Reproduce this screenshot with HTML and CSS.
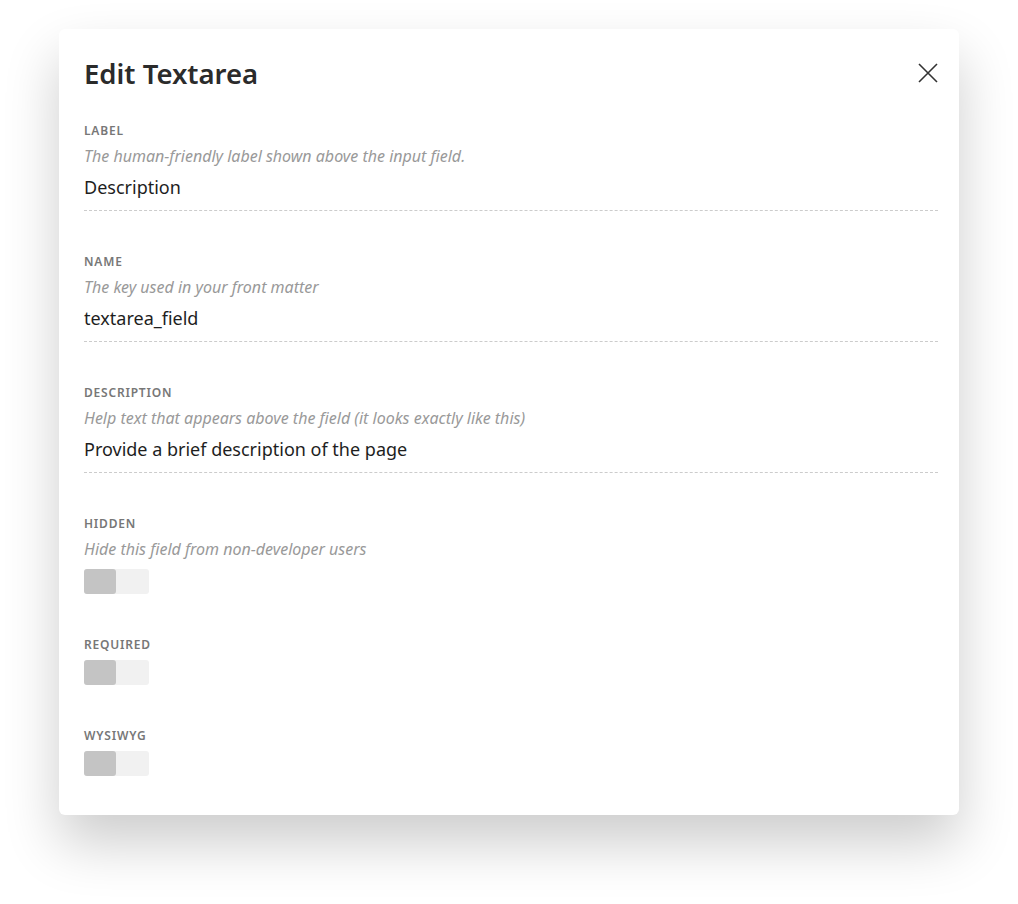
FILE: index.html
```html
<!DOCTYPE html>
<html lang="en">
<head>
    <meta charset="UTF-8">
    <title>Edit Textarea</title>
    <link rel="stylesheet" href="styles.css">
</head>
<body>
    <div class="modal">
        <div class="modal-header">
            <h1 class="modal-title">Edit Textarea</h1>
            <button class="close" aria-label="Close">
                <svg width="20" height="20" viewBox="0 0 20 20">
                    <path d="M1 1L19 19M19 1L1 19" stroke="#333" stroke-width="1.6" fill="none"/>
                </svg>
            </button>
        </div>

        <div class="field">
            <div class="field-label">Label</div>
            <div class="field-help">The human-friendly label shown above the input field.</div>
            <div class="field-value">Description</div>
        </div>

        <div class="field">
            <div class="field-label">Name</div>
            <div class="field-help">The key used in your front matter</div>
            <div class="field-value">textarea_field</div>
        </div>

        <div class="field">
            <div class="field-label">Description</div>
            <div class="field-help">Help text that appears above the field (it looks exactly like this)</div>
            <div class="field-value">Provide a brief description of the page</div>
        </div>

        <div class="field">
            <div class="field-label">Hidden</div>
            <div class="field-help">Hide this field from non-developer users</div>
            <div class="toggle"><span class="knob"></span></div>
        </div>

        <div class="field">
            <div class="field-label">Required</div>
            <div class="toggle"><span class="knob"></span></div>
        </div>

        <div class="field">
            <div class="field-label">WYSIWYG</div>
            <div class="toggle"><span class="knob"></span></div>
        </div>
    </div>
</body>
</html>
```

FILE: styles.css
```css
* {
    margin: 0;
    padding: 0;
    box-sizing: border-box;
}

html,
body {
    background: #fff;
}

body {
    font-family: "Noto Sans", sans-serif;
    color: #222;
    padding: 29px 59px;
    min-height: 904px;
}

.modal {
    width: 900px;
    background: #fff;
    border-radius: 6px;
    box-shadow: 0 28px 55px rgba(0, 0, 0, 0.2);
    padding: 29px 21px 38px 25px;
}

.modal-header {
    display: flex;
    justify-content: space-between;
    align-items: center;
    height: 32px;
}

.modal-title {
    font-size: 27.5px;
    font-weight: 600;
    color: #2b2b2b;
    line-height: 32px;
}

.close {
    border: none;
    background: none;
    width: 20px;
    height: 20px;
    margin-top: -3px;
}

.field {
    margin-top: 33px;
    padding-bottom: 1px;
}

.field + .field {
    margin-top: 42px;
}

.field-label {
    font-size: 12px;
    line-height: 16px;
    font-weight: 600;
    letter-spacing: 0.8px;
    text-transform: uppercase;
    color: #777;
}

.field-help {
    margin-top: 7px;
    font-size: 16px;
    line-height: 20px;
    font-style: italic;
    color: #999;
}

.field-value {
    margin-top: 8px;
    font-size: 18px;
    line-height: 26px;
    color: #1e1e1e;
    padding-bottom: 10px;
    border-bottom: 1px dashed #ccc;
}

.field-help + .toggle {
    margin-top: 10px;
}

.toggle {
    margin-top: 7px;
    width: 65px;
    height: 25px;
    background: #f1f1f1;
    border-radius: 3px;
}

.knob {
    display: block;
    width: 32px;
    height: 25px;
    background: #c4c4c4;
    border-radius: 3px;
}
```
